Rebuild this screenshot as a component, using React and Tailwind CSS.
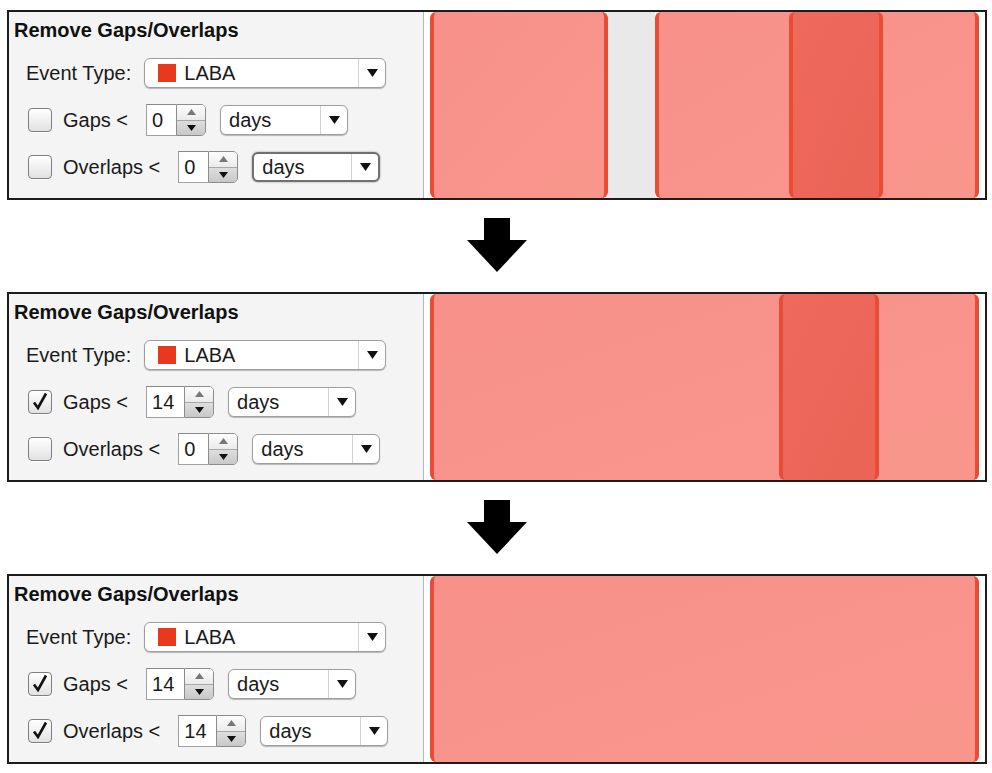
const panels = [
  {
    gaps: { checked: false, value: "0" },
    overlaps: { checked: false, value: "0", focused: true },
    bars: [
      { left: 6, width: 178, dark: false },
      { left: 231, width: 324, dark: false },
      { left: 365, width: 94, dark: true },
    ],
    holes: [{ left: 184, width: 47 }],
  },
  {
    gaps: { checked: true, value: "14" },
    overlaps: { checked: false, value: "0" },
    bars: [
      { left: 6, width: 549, dark: false },
      { left: 355, width: 100, dark: true },
    ],
    holes: [],
  },
  {
    gaps: { checked: true, value: "14" },
    overlaps: { checked: true, value: "14" },
    bars: [{ left: 6, width: 549, dark: false }],
    holes: [],
  },
];

function DownTriangle() {
  return (
    <svg width="11" height="8" viewBox="0 0 11 8">
      <polygon points="0,0 11,0 5.5,8" fill="#111" />
    </svg>
  );
}

function Checkbox({ checked }) {
  return (
    <div className="flex h-[24px] w-[24px] items-center justify-center rounded-[4px] border border-[#7e7e7e] bg-linear-to-b from-white to-[#e2e2e2] shadow-[0_1px_0_rgba(255,255,255,0.8)]">
      {checked && (
        <svg width="18" height="18" viewBox="0 0 18 18" className="-mt-[2px]">
          <path d="M3 10.5 L7 16 L15 1.5" fill="none" stroke="#111" strokeWidth="2.6" strokeLinejoin="miter" />
        </svg>
      )}
    </div>
  );
}

function Spinner({ value }) {
  const fieldWidth = value.length > 1 ? "w-[38px]" : "w-[30px]";
  return (
    <div className="flex h-[32px]">
      <div className={`flex items-center border border-r-0 border-[#a0a0a0] border-t-[#888] bg-white pl-[5px] ${fieldWidth}`}>
        {value}
      </div>
      <div className="flex w-[30px] flex-col overflow-hidden rounded-r-[5px] border border-[#8c8c8c]">
        <div className="flex flex-1 items-center justify-center border-b border-[#a8a8a8] bg-linear-to-b from-[#fdfdfd] to-[#ebebeb]">
          <svg width="9" height="6" viewBox="0 0 9 6">
            <polygon points="0,6 9,6 4.5,0" fill="#777" />
          </svg>
        </div>
        <div className="flex flex-1 items-center justify-center bg-linear-to-b from-[#dedede] to-[#c8c8c8]">
          <svg width="9" height="6" viewBox="0 0 9 6">
            <polygon points="0,0 9,0 4.5,6" fill="#111" />
          </svg>
        </div>
      </div>
    </div>
  );
}

function Select({ children, wide, focused }) {
  const size = wide ? "w-[242px]" : "w-[128px]";
  const frame = focused
    ? "border-2 border-[#707070] shadow-[0_0_2px_rgba(0,0,0,0.45)]"
    : "border border-[#9e9e9e] shadow-[0_1px_1px_rgba(0,0,0,0.25)]";
  return (
    <div className={`flex h-[30px] rounded-[6px] bg-white ${size} ${frame}`}>
      <div className="flex flex-1 items-center gap-[8px] pl-[8px]">{children}</div>
      <div className="flex w-[27px] items-center justify-center border-l border-[#d2d2d2]">
        <DownTriangle />
      </div>
    </div>
  );
}

function Row({ label, checked, value, focused }) {
  return (
    <div className="flex h-[32px] items-center pl-[14px]">
      <Checkbox checked={checked} />
      <span className="ml-[11px]">{label}</span>
      <div className="ml-[18px]">
        <Spinner value={value} />
      </div>
      <div className="ml-[14px]">
        <Select focused={focused}>days</Select>
      </div>
    </div>
  );
}

function Panel({ gaps, overlaps, bars, holes }) {
  return (
    <div className="flex h-[190px] w-[980px] border-2 border-[#1c1c1c]">
      <div className="w-[415px] border-r border-[#b8b8b8] bg-[#f4f4f4] pl-[5px] pt-[6px]">
        <div className="text-[20px] font-bold leading-[24px] text-[#111]">Remove Gaps/Overlaps</div>
        <div className="mt-[16px] flex h-[30px] items-center pl-[12px]">
          <span>Event Type:</span>
          <div className="ml-[13px]">
            <Select wide>
              <span className="ml-[5px] h-[18px] w-[18px] bg-[#e8391f]" />
              <span>LABA</span>
            </Select>
          </div>
        </div>
        <div className="mt-[16px]">
          <Row label="Gaps <" {...gaps} />
        </div>
        <div className="mt-[15px]">
          <Row label="Overlaps <" {...overlaps} />
        </div>
      </div>
      <div className="relative flex-1 bg-white">
        {holes.map((h, i) => (
          <div key={i} className="absolute inset-y-0 bg-[#e9e9e9]" style={{ left: h.left, width: h.width }} />
        ))}
        {bars.map((b, i) => (
          <div
            key={i}
            className={`absolute inset-y-0 rounded-[6px] border-x-[4px] border-[#ea4b35] bg-linear-to-br ${b.dark ? "from-[#ed6a5c] to-[#eb6456]" : "from-[#f7918a] to-[#f9968c]"}`}
            style={{ left: b.left, width: b.width }}
          />
        ))}
      </div>
    </div>
  );
}

function Arrow() {
  return (
    <div className="flex h-[92px] justify-center pt-[18px]">
      <svg width="60" height="54" viewBox="0 0 60 54">
        <polygon points="17,0 43,0 43,22 60,22 30,54 0,22 17,22" fill="#000" />
      </svg>
    </div>
  );
}

export default function App() {
  return (
    <div className="h-[773px] w-[992px] bg-white pl-[7px] pt-[10px] font-['Liberation_Sans',Arial,sans-serif] text-[20px] text-[#1a1a1a]">
      <div className="w-[980px]">
        <Panel {...panels[0]} />
        <Arrow />
        <Panel {...panels[1]} />
        <Arrow />
        <Panel {...panels[2]} />
      </div>
    </div>
  );
}
